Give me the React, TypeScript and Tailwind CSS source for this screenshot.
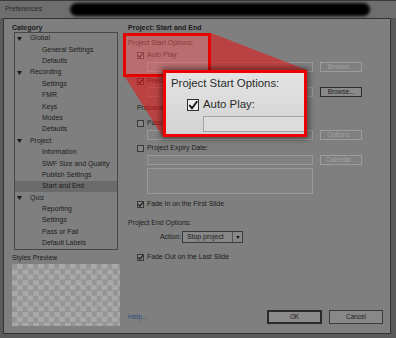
import React from 'react'

type Item = { label: string; top?: boolean; selected?: boolean }

const tree: Item[] = [
  { label: 'Global', top: true },
  { label: 'General Settings' },
  { label: 'Defaults' },
  { label: 'Recording', top: true },
  { label: 'Settings' },
  { label: 'FMR' },
  { label: 'Keys' },
  { label: 'Modes' },
  { label: 'Defaults' },
  { label: 'Project', top: true },
  { label: 'Information' },
  { label: 'SWF Size and Quality' },
  { label: 'Publish Settings' },
  { label: 'Start and End', selected: true },
  { label: 'Quiz', top: true },
  { label: 'Reporting' },
  { label: 'Settings' },
  { label: 'Pass or Fail' },
  { label: 'Default Labels' },
]

function Check({ checked }: { checked?: boolean }) {
  return (
    <span className="relative w-[7px] h-[7px] shrink-0 border border-[#3a3a3a] bg-[#868686]">
      {checked && (
        <svg viewBox="0 0 7 7" className="absolute -left-px -top-px w-[7px] h-[7px]">
          <path d="M1.3 3.4 L2.9 5.2 L5.9 1.3" stroke="#161616" strokeWidth="1.1" fill="none" />
        </svg>
      )}
    </span>
  )
}

function CheckRow({ checked, label }: { checked?: boolean; label: string }) {
  return (
    <div className="flex items-center h-[10px] pl-[9px] gap-[3px]">
      <Check checked={checked} />
      <span>{label}</span>
    </div>
  )
}

function FieldRow({ button, enabled }: { button: string; enabled?: boolean }) {
  return (
    <div className="flex h-[10px]">
      <div className="ml-[19px] w-[166px] h-[10px] border border-[#999999] bg-[#828282]" />
      <div
        className={
          enabled
            ? 'ml-[7px] w-[42px] h-[10px] flex items-center justify-center border border-[#2c2c2c] bg-[#898989] text-[6.4px] text-[#1a1a1a]'
            : 'ml-[7px] w-[42px] h-[10px] flex items-center justify-center border border-[#9c9c9c] text-[6.4px] text-[#a2a2a2]'
        }
      >
        {button}
      </div>
    </div>
  )
}

export default function App() {
  return (
    <div className="relative w-[396px] h-[338px] overflow-hidden bg-[#5a5a5a] font-['Liberation_Sans',Arial,sans-serif] text-[6.9px] leading-none text-[#1c1c1c]">
      {/* title bar */}
      <div className="h-[18px] flex items-center pl-[5px] bg-[#6e6e6e] border-t border-[#3a3a3a] text-[#2c2c2c]">
        Preferences
      </div>

      {/* dialog body */}
      <div className="ml-[3px] w-[388px] h-[316px] flex border border-[#333333] bg-[#7f7f7f]">
        {/* left column */}
        <div className="ml-[8px] w-[108px] flex flex-col pt-[3px]">
          <div className="h-[10px] flex items-center font-bold text-[7px]">Category</div>
          <div className="ml-[2px] w-[104px] h-[218px] border border-[#474747]">
            {tree.map((it, i) => (
              <div
                key={i}
                className={
                  it.selected
                    ? 'h-[11.4px] flex items-center pl-[27px] bg-[#6b6b6b]'
                    : it.top
                      ? 'h-[11.4px] flex items-center pl-[2px]'
                      : 'h-[11.4px] flex items-center pl-[27px]'
                }
              >
                {it.top && (
                  <svg viewBox="0 0 5 4" className="w-[5px] h-[4px] mr-[8px]">
                    <path d="M0 0 H5 L2.5 4 Z" fill="#1a1a1a" />
                  </svg>
                )}
                <span>{it.label}</span>
              </div>
            ))}
          </div>
          <div className="mt-[3px] h-[10px] flex items-center">Styles Preview</div>
          <div className="mt-[1px] w-[108px] h-[62px] bg-[conic-gradient(#a9a9a9_25%,#959595_0_50%,#a9a9a9_0_75%,#959595_0)] bg-size-[10.6px_10.6px]" />
        </div>

        {/* right column */}
        <div className="ml-[8px] mr-[7px] flex-1 flex flex-col pt-[3px] pb-[9px]">
          <div className="h-[10px] flex items-center font-bold text-[7px]">Project: Start and End</div>
          <div className="mt-[6px] h-[10px] flex items-center">Project Start Options:</div>
          <div className="mt-[2px]">
            <CheckRow checked label="Auto Play:" />
          </div>
          <div className="mt-[2px]">
            <FieldRow button="Browse..." />
          </div>
          <div className="mt-[4px]">
            <CheckRow checked label="Preloader:" />
          </div>
          <div className="mt-[1px]">
            <FieldRow button="Browse..." enabled />
          </div>
          <div className="mt-[6px] h-[10px] flex items-center pl-[9px]">Preloader %:</div>
          <div className="mt-[5px]">
            <CheckRow label="Password Protect Project:" />
          </div>
          <div className="mt-[2px]">
            <FieldRow button="Options..." />
          </div>
          <div className="mt-[3px]">
            <CheckRow label="Project Expiry Date:" />
          </div>
          <div className="mt-[2px]">
            <FieldRow button="Calendar..." />
          </div>
          <div className="mt-[3px] ml-[19px] w-[166px] h-[26px] border border-[#999999] bg-[#828282]" />
          <div className="mt-[5px]">
            <CheckRow checked label="Fade In on the First Slide" />
          </div>
          <div className="mt-[9px] h-[10px] flex items-center">Project End Options:</div>
          <div className="mt-[3px] h-[12px] flex items-center">
            <span className="w-[53px] text-right">Action:</span>
            <div className="ml-[1px] w-[61px] h-[12px] flex items-center border border-[#3a3a3a] bg-[#878787]">
              <span className="pl-[4px] flex-1">Stop project</span>
              <span className="w-[10px] h-full border-l border-[#555555] flex items-center justify-center">
                <svg viewBox="0 0 5 4" className="w-[4px] h-[3px]">
                  <path d="M0 0 H5 L2.5 4 Z" fill="#1a1a1a" />
                </svg>
              </span>
            </div>
          </div>
          <div className="mt-[9px]">
            <CheckRow checked label="Fade Out on the Last Slide" />
          </div>
          <div className="mt-auto h-[14px] flex items-center">
            <span className="text-[#2d4c78]">Help...</span>
            <div className="ml-auto w-[55px] h-[14px] flex items-center justify-center border-2 border-[#2a2a2a] bg-[#8a8a8a] text-[6.4px]">
              OK
            </div>
            <div className="ml-[7px] w-[54px] h-[14px] flex items-center justify-center border border-[#3a3a3a] bg-[#888888] text-[6.4px]">
              Cancel
            </div>
          </div>
        </div>
      </div>

      {/* redaction bar over the title */}
      <div className="absolute left-[70px] top-[3px] w-[300px] h-[13px] rounded-full bg-black blur-[1.5px]" />

      {/* highlight wedge */}
      <svg className="absolute left-0 top-0 w-[396px] h-[338px] pointer-events-none" viewBox="0 0 396 338">
        <polygon points="211,33 307,70 163,137 125,77 211,77" fill="rgba(225,25,25,0.6)" />
      </svg>

      {/* small highlight rect */}
      <div className="absolute left-[123px] top-[33px] w-[88px] h-[44px] border-[3px] border-[#e60000] bg-[rgba(255,90,90,0.45)]" />

      {/* magnified callout */}
      <div className="absolute left-[163px] top-[70px] w-[144px] h-[67px] border-[3px] border-[#f00000] overflow-hidden bg-gradient-to-b from-[#e3e3e3] to-[#d3d3d3] shadow-[0_0_6px_2px_rgba(0,0,0,0.45)] text-[11.4px] text-[#2a2a2a]">
        <div className="pt-[5px] pl-[5px] h-[17px] flex items-center">Project Start Options:</div>
        <div className="mt-[9px] h-[12px] flex items-center pl-[21px] gap-[4px]">
          <span className="relative w-[12px] h-[12px] border border-[#2e2e2e] bg-[#ececec]">
            <svg viewBox="0 0 12 12" className="absolute -left-px -top-px w-[12px] h-[12px]">
              <path d="M2.3 6 L5 9.2 L10.2 2.3" stroke="#111111" strokeWidth="1.8" fill="none" />
            </svg>
          </span>
          <span>Auto Play:</span>
        </div>
        <div className="mt-[5px] ml-[37px] w-[120px] h-[16px] border border-[#a3a3a3] bg-[#dcdcdc]" />
      </div>
    </div>
  )
}
